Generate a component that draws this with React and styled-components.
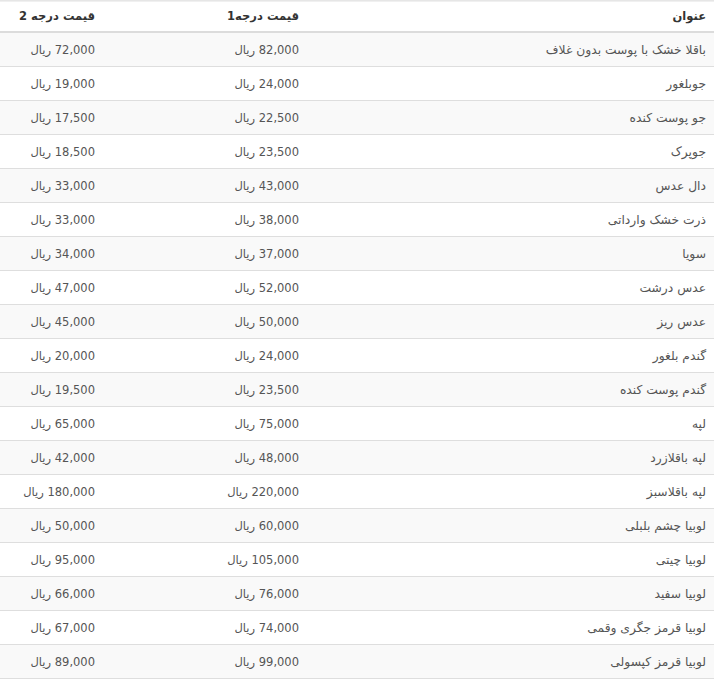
import React from "react";
import styled, { createGlobalStyle } from "styled-components";

const Global = createGlobalStyle`
  html, body { margin: 0; padding: 0; background: #fff; }
  body { font-family: "DejaVu Sans", Tahoma, sans-serif; }
`;

const Wrap = styled.div`
  width: 714px;
  border-top: 1px solid #e6e6e6;
  box-shadow: inset 0 1px 0 #f0f0f0;
`;

const Table = styled.table`
  width: 100%;
  border-collapse: collapse;
  direction: rtl;
  table-layout: fixed;
  font-size: 11.5px;
`;

const Th = styled.th`
  width: ${(p) => p.$w}px;
  text-align: right;
  padding: 0 8px;
  height: 31px;
  font-weight: bold;
  color: #333;
  font-size: 11.5px;
  border-bottom: 2px solid #dcdcdc;
  box-sizing: border-box;
`;

const Tr = styled.tr`
  background: ${(p) => (p.$odd ? "#f9f9f9" : "#fff")};
`;

const Td = styled.td`
  text-align: right;
  padding: 0 8px;
  height: 33px;
  color: #555;
  border-bottom: 1px solid #dedede;
  white-space: nowrap;
`;

const Title = styled.span`
  font-size: 12.3px;
`;

const rows = [
  ["باقلا خشک با پوست بدون غلاف", "82,000", "72,000"],
  ["جوبلغور", "24,000", "19,000"],
  ["جو پوست کنده", "22,500", "17,500"],
  ["جوپرک", "23,500", "18,500"],
  ["دال عدس", "43,000", "33,000"],
  ["ذرت خشک وارداتی", "38,000", "33,000"],
  ["سویا", "37,000", "34,000"],
  ["عدس درشت", "52,000", "47,000"],
  ["عدس ریز", "50,000", "45,000"],
  ["گندم بلغور", "24,000", "20,000"],
  ["گندم پوست کنده", "23,500", "19,500"],
  ["لپه", "75,000", "65,000"],
  ["لپه باقلازرد", "48,000", "42,000"],
  ["لپه باقلاسبز", "220,000", "180,000"],
  ["لوبیا چشم بلبلی", "60,000", "50,000"],
  ["لوبیا چیتی", "105,000", "95,000"],
  ["لوبیا سفید", "76,000", "66,000"],
  ["لوبیا قرمز جگری وقمی", "74,000", "67,000"],
  ["لوبیا قرمز کپسولی", "99,000", "89,000"],
];

export default function App() {
  return (
    <>
      <Global />
      <Wrap>
        <Table>
          <thead>
            <tr>
              <Th $w={407}>عنوان</Th>
              <Th $w={204}>قیمت درجه1</Th>
              <Th $w={103}>قیمت درجه 2</Th>
            </tr>
          </thead>
          <tbody>
            {rows.map((r, i) => (
              <Tr key={i} $odd={i % 2 === 0}>
                <Td><Title>{r[0]}</Title></Td>
                <Td>{r[1]} ریال</Td>
                <Td>{r[2]} ریال</Td>
              </Tr>
            ))}
          </tbody>
        </Table>
      </Wrap>
    </>
  );
}
